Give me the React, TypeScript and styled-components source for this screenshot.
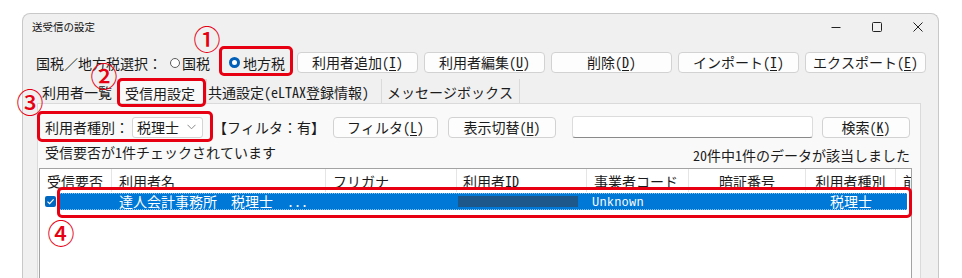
import React from "react";
import styled, { createGlobalStyle } from "styled-components";

const Global = createGlobalStyle`
  html, body { margin: 0; padding: 0; background: #ffffff; }
  body {
    font-family: "Noto Sans Mono CJK JP", "Noto Sans CJK JP", sans-serif;
    font-size: 14px;
    color: #1b1b1b;
  }
  * { box-sizing: border-box; }
`;

const Page = styled.div`
  position: relative;
  width: 962px;
  height: 278px;
  overflow: hidden;
  padding: 13px 0 0 22px;
`;

const Window = styled.div`
  width: 917px;
  height: 290px;
  border: 1px solid #c8c8c8;
  border-bottom: none;
  border-radius: 8px 8px 0 0;
  background: #f0f0f0;
  display: flex;
  flex-direction: column;
`;

const TitleBar = styled.div`
  height: 26px;
  display: flex;
  align-items: center;
  padding-left: 9px;
`;

const Title = styled.div`
  font-family: "Noto Sans CJK JP", sans-serif;
  font-size: 10.5px;
  line-height: 14px;
  color: #111;
  flex: 1;
`;

const Controls = styled.div`
  display: flex;
  height: 26px;
`;

const Ctrl = styled.div`
  width: 41px;
  height: 26px;
  display: flex;
  align-items: center;
  justify-content: center;
`;

const Toolbar = styled.div`
  display: flex;
  align-items: center;
  height: 21px;
  margin-top: 12px;
  padding-left: 13px;
`;

const Label = styled.span<{ $ml?: number }>`
  margin-left: ${(p) => p.$ml ?? 0}px;
  line-height: 20px;
  white-space: nowrap;
`;

const RadioDot = styled.span<{ $on?: boolean; $ml?: number }>`
  display: inline-block;
  width: ${(p) => (p.$on ? 11 : 10)}px;
  height: ${(p) => (p.$on ? 11 : 10)}px;
  margin-left: ${(p) => p.$ml ?? 0}px;
  border-radius: 50%;
  border: ${(p) => (p.$on ? "3.5px solid #005fb8" : "1px solid #5c5c5c")};
  background: #fff;
  flex: none;
`;

const Btn = styled.button<{ $w: number; $ml?: number; $h?: number }>`
  width: ${(p) => p.$w}px;
  height: ${(p) => p.$h ?? 21}px;
  margin-left: ${(p) => p.$ml ?? 0}px;
  padding: 0;
  border: 1px solid #d2d2d2;
  border-radius: 4px;
  background: #fdfdfd;
  font: inherit;
  font-size: 14px;
  line-height: 19px;
  color: #1b1b1b;
  white-space: nowrap;
  flex: none;
  u { text-decoration-thickness: 1px; text-underline-offset: 2px; }
`;

const TabStrip = styled.div`
  display: flex;
  height: 24px;
  margin-top: 6px;
  padding-left: 15px;
`;

const Tab = styled.div<{ $w: number; $pl: number; $sel?: boolean; $sep?: boolean }>`
  width: ${(p) => p.$w}px;
  padding-left: ${(p) => p.$pl}px;
  padding-top: 2px;
  display: flex;
  align-items: center;
  white-space: nowrap;
  overflow: hidden;
  background: ${(p) => (p.$sel ? "#f9f9f9" : "transparent")};
  border: ${(p) => (p.$sel ? "1px solid #d9d9d9" : "none")};
  border-bottom: none;
  border-right: ${(p) => (p.$sel ? "1px solid #d9d9d9" : p.$sep ? "1px solid #dadada" : "none")};
`;

const Panel = styled.div`
  flex: 1;
  margin-left: 14px;
  width: 884px;
  background: #f9f9f9;
  border: 1px solid #dadada;
  border-bottom: none;
  display: flex;
  flex-direction: column;
`;

const FilterRow = styled.div`
  display: flex;
  align-items: center;
  height: 22px;
  margin-top: 12px;
  padding-left: 7px;
`;

const Select = styled.div<{ $ml?: number }>`
  width: 71px;
  height: 21px;
  margin-left: ${(p) => p.$ml ?? 0}px;
  display: flex;
  align-items: center;
  justify-content: space-between;
  padding: 0 6px 0 4px;
  background: #fff;
  border: 1px solid #d4d4d4;
  border-radius: 3px;
  line-height: 19px;
`;

const TextBox = styled.div<{ $ml?: number }>`
  width: 241px;
  height: 22px;
  margin-left: ${(p) => p.$ml ?? 0}px;
  background: #fff;
  border: 1px solid #dcdcdc;
  border-bottom: 1px solid #8a8a8a;
  border-radius: 3px;
`;

const StatusRow = styled.div`
  display: flex;
  justify-content: space-between;
  height: 22px;
  margin-top: 4px;
  padding: 0 10px 0 7px;
`;

const StatusText = styled.span<{ $mt?: number }>`
  margin-top: ${(p) => p.$mt ?? 0}px;
  line-height: 20px;
  white-space: nowrap;
`;

const Table = styled.div`
  flex: 1;
  margin: 4px 0 0 1px;
  width: 873px;
  background: #fff;
  border: 1px solid #a3a3a3;
  border-bottom: none;
  display: flex;
  flex-direction: column;
`;

const HeaderRow = styled.div`
  display: grid;
  grid-template-columns: 72px 214px 131px 130px 102px 117px 90px 1fr;
  height: 23px;
`;

const HeadCell = styled.div<{ $center?: boolean; $pl?: number }>`
  display: flex;
  align-items: center;
  justify-content: ${(p) => (p.$center ? "center" : "flex-start")};
  padding-left: ${(p) => (p.$center ? 0 : p.$pl ?? 7)}px;
  border-right: 1px solid #e5e5e5;
  white-space: nowrap;
  overflow: hidden;
  line-height: 20px;
  &:last-child { border-right: none; }
`;

const DataRow = styled.div`
  display: flex;
  height: 17px;
  margin-top: 1px;
`;

const CheckCell = styled.div`
  width: 20px;
  padding-left: 5px;
  display: flex;
  align-items: center;
`;

const Check = styled.span`
  width: 11px;
  height: 11px;
  border-radius: 2px;
  background: #0067c0;
  display: flex;
  align-items: center;
  justify-content: center;
`;

const Band = styled.div`
  width: 847px;
  background: #0078d7;
  border-top: 1px dotted #8ec2ee;
  border-bottom: 1px dotted #8ec2ee;
  display: grid;
  grid-template-columns: 52px 214px 131px 130px 102px 117px 90px 1fr;
  color: #ffffff;
`;

const Cell = styled.div<{ $center?: boolean; $pl?: number }>`
  display: flex;
  align-items: center;
  justify-content: ${(p) => (p.$center ? "center" : "flex-start")};
  padding-left: ${(p) => (p.$center ? 0 : p.$pl ?? 0)}px;
  white-space: pre;
  overflow: hidden;
  line-height: 15px;
`;

const Mask = styled.span`
  display: block;
  margin-left: 1px;
  width: 120px;
  height: 11px;
  background: #1e578a;
`;

const Mono = styled.span`
  display: block;
  margin-top: 4px;
  font-family: "Liberation Mono", monospace;
  font-size: 12px;
  line-height: 13px;
  font-weight: 400;
  letter-spacing: 0.2px;
`;

/* annotation overlays */
const Mark = styled.div<{ $x: number; $y: number; $w: number; $h: number }>`
  position: absolute;
  left: ${(p) => p.$x}px;
  top: ${(p) => p.$y}px;
  width: ${(p) => p.$w}px;
  height: ${(p) => p.$h}px;
  border: 3px solid #e60012;
  border-radius: 5px;
  pointer-events: none;
`;

const Num = styled.div<{ $x: number; $y: number }>`
  position: absolute;
  left: ${(p) => p.$x}px;
  top: ${(p) => p.$y}px;
  transform: translate(-50%, -50%);
  font-family: "Noto Sans CJK JP", sans-serif;
  font-size: 27px;
  font-weight: 500;
  line-height: 27px;
  color: #e60012;
  pointer-events: none;
`;

const Minimize = () => (
  <svg width="10" height="10" viewBox="0 0 10 10">
    <line x1="0.5" y1="5.5" x2="9.5" y2="5.5" stroke="#222" strokeWidth="1" />
  </svg>
);
const Maximize = () => (
  <svg width="10" height="10" viewBox="0 0 10 10">
    <rect x="0.5" y="0.5" width="9" height="9" rx="1" fill="none" stroke="#222" strokeWidth="1" />
  </svg>
);
const Close = () => (
  <svg width="10" height="10" viewBox="0 0 10 10">
    <path d="M0.5 0.5 L9.5 9.5 M9.5 0.5 L0.5 9.5" stroke="#222" strokeWidth="1" />
  </svg>
);
const Chevron = () => (
  <svg width="9" height="6" viewBox="0 0 9 6">
    <path d="M0.5 0.8 L4.5 4.8 L8.5 0.8" fill="none" stroke="#8a8a8a" strokeWidth="1" />
  </svg>
);
const Tick = () => (
  <svg width="9" height="9" viewBox="0 0 9 9">
    <path d="M1.5 4.6 L3.6 6.6 L7.6 2.4" fill="none" stroke="#fff" strokeWidth="1.2" />
  </svg>
);

const buttons: [string, string, string][] = [
  ["利用者追加(", "I", ")"],
  ["利用者編集(", "U", ")"],
  ["削除(", "D", ")"],
  ["インポート(", "I", ")"],
  ["エクスポート(", "E", ")"],
];

export default function App() {
  return (
    <Page>
      <Global />
      <Window>
        <TitleBar>
          <Title>送受信の設定</Title>
          <Controls>
            <Ctrl><Minimize /></Ctrl>
            <Ctrl><Maximize /></Ctrl>
            <Ctrl><Close /></Ctrl>
          </Controls>
        </TitleBar>

        <Toolbar>
          <Label>国税／地方税選択：</Label>
          <RadioDot $ml={8} />
          <Label $ml={2}>国税</Label>
          <RadioDot $on $ml={19} />
          <Label $ml={3}>地方税</Label>
          {buttons.map(([a, k, b], i) => (
            <Btn key={i} $w={121} $ml={i === 0 ? 12 : 6}>
              {a}
              <u>{k}</u>
              {b}
            </Btn>
          ))}
        </Toolbar>

        <TabStrip>
          <Tab $w={79} $pl={4}>利用者一覧</Tab>
          <Tab $w={90} $pl={7} $sel>受信用設定</Tab>
          <Tab $w={175} $pl={1} $sep>共通設定(eLTAX登録情報)</Tab>
          <Tab $w={138} $pl={5} $sep>メッセージボックス</Tab>
        </TabStrip>

        <Panel>
          <FilterRow>
            <Label>利用者種別：</Label>
            <Select $ml={3}>
              <span>税理士</span>
              <Chevron />
            </Select>
            <Label $ml={10}>【フィルタ：有】</Label>
            <Btn $w={105} $ml={8}>
              フィルタ(<u>L</u>)
            </Btn>
            <Btn $w={108} $ml={10}>
              表示切替(<u>H</u>)
            </Btn>
            <TextBox $ml={16} />
            <Btn $w={88} $ml={9}>
              検索(<u>K</u>)
            </Btn>
          </FilterRow>

          <StatusRow>
            <StatusText>受信要否が1件チェックされています</StatusText>
            <StatusText $mt={3}>20件中1件のデータが該当しました</StatusText>
          </StatusRow>

          <Table>
            <HeaderRow>
              <HeadCell>受信要否</HeadCell>
              <HeadCell>利用者名</HeadCell>
              <HeadCell>フリガナ</HeadCell>
              <HeadCell $pl={6}>利用者ID</HeadCell>
              <HeadCell>事業者コード</HeadCell>
              <HeadCell $center>暗証番号</HeadCell>
              <HeadCell $center>利用者種別</HeadCell>
              <HeadCell>前回受信日時</HeadCell>
            </HeaderRow>
            <DataRow>
              <CheckCell>
                <Check><Tick /></Check>
              </CheckCell>
              <Band>
                <Cell />
                <Cell $pl={7}>達人会計事務所　税理士　...</Cell>
                <Cell />
                <Cell><Mask /></Cell>
                <Cell $pl={5}><Mono>Unknown</Mono></Cell>
                <Cell />
                <Cell $center>税理士</Cell>
                <Cell />
              </Band>
            </DataRow>
          </Table>
        </Panel>
      </Window>

      <Mark $x={219} $y={46} $w={74} $h={30} />
      <Num $x={207} $y={38}>①</Num>
      <Mark $x={117} $y={78} $w={89} $h={29} />
      <Num $x={104} $y={75}>②</Num>
      <Mark $x={37} $y={111} $w={176} $h={31} />
      <Num $x={30} $y={101}>③</Num>
      <Mark $x={57} $y={187} $w={855} $h={31} />
      <Num $x={61} $y={232}>④</Num>
    </Page>
  );
}
